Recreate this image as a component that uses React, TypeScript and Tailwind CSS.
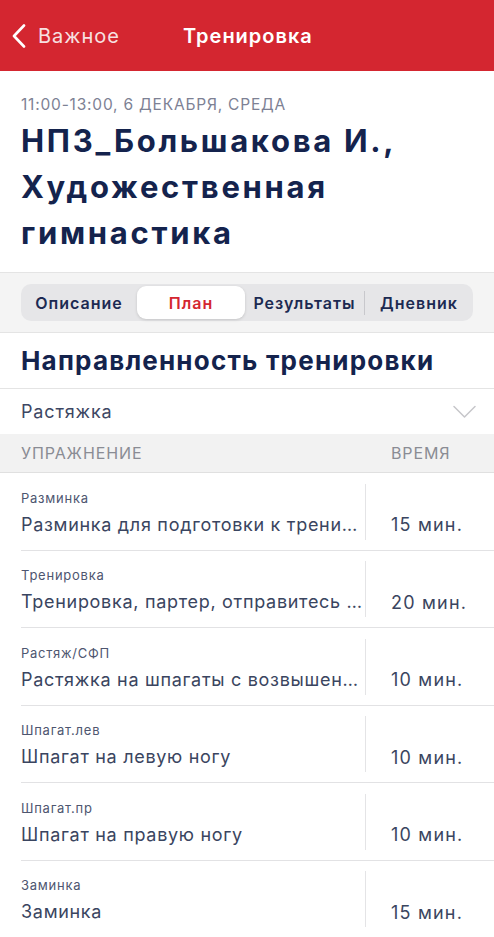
const exercises = [
  { cat: 'Разминка', name: 'Разминка для подготовки к тренировке', time: '15 мин.' },
  { cat: 'Тренировка', name: 'Тренировка, партер, отправитесь на ковёр', time: '20 мин.' },
  { cat: 'Растяж/СФП', name: 'Растяжка на шпагаты с возвышения', time: '10 мин.' },
  { cat: 'Шпагат.лев', name: 'Шпагат на левую ногу', time: '10 мин.' },
  { cat: 'Шпагат.пр', name: 'Шпагат на правую ногу', time: '10 мин.' },
  { cat: 'Заминка', name: 'Заминка', time: '15 мин.' },
];

export default function App() {
  return (
    <div className="w-[494px] min-h-[937px] bg-white font-['Inter',sans-serif] overflow-hidden">
      {/* Nav bar */}
      <div className="h-[71px] bg-[#d42630] flex items-center text-white">
        <div className="flex items-center pl-[12px] w-[183px]">
          <svg width="14" height="24" viewBox="0 0 14 24" fill="none">
            <polyline points="12,1.5 2,12 12,22.5" stroke="white" strokeWidth="2.6" strokeLinecap="round" strokeLinejoin="round" />
          </svg>
          <span className="text-[20px] ml-[12px] tracking-[1px] text-[#f7e0e1]">Важное</span>
        </div>
        <span className="text-[20px] font-semibold tracking-[1px]">Тренировка</span>
      </div>

      {/* Title */}
      <div className="px-[21px] pt-[22px] pb-[16px]">
        <div className="text-[15.5px] text-[#7d8194] tracking-[0.8px]">11:00-13:00, 6 ДЕКАБРЯ, СРЕДА</div>
        <h1 className="mt-[2px] text-[31px] leading-[46px] font-bold text-[#14234d] tracking-[2.7px]">
          НПЗ_Большакова И.,<br />Художественная<br />гимнастика
        </h1>
      </div>

      {/* Segmented control */}
      <div className="border-y border-[#e4e4e4] bg-[#f4f4f4] h-[61px] flex items-center px-[21px]">
        <div className="w-full h-[37px] rounded-[10px] bg-[#e6e6e8] flex items-center text-[16px] font-semibold tracking-[1px] text-[#1c2a52]">
          <div className="w-[116px] text-center">Описание</div>
          <div className="w-[108px] h-[33px] flex items-center justify-center bg-white rounded-[9px] shadow-[0_1px_3px_rgba(0,0,0,0.15)] text-[#d42630]">
            План
          </div>
          <div className="w-[120px] text-center border-r border-[#c8c8cc]">Результаты</div>
          <div className="flex-1 text-center">Дневник</div>
        </div>
      </div>

      {/* Section title */}
      <div className="h-[56px] flex items-center px-[21px] border-b border-[#e4e4e4]">
        <h2 className="text-[26px] font-bold text-[#14234d] tracking-[1.2px]">Направленность тренировки</h2>
      </div>

      {/* Dropdown */}
      <div className="h-[45px] flex items-center justify-between pl-[21px] pr-[18px]">
        <span className="text-[18px] text-[#3d4763] tracking-[0.85px]">Растяжка</span>
        <svg width="23" height="14" viewBox="0 0 23 14" fill="none">
          <polyline points="1,1.5 11.5,12 22,1.5" stroke="#c6c6ca" strokeWidth="1.5" strokeLinecap="round" strokeLinejoin="round" />
        </svg>
      </div>

      {/* Table header */}
      <div className="h-[39px] bg-[#f2f2f2] border-b border-[#e0e0e0] flex items-center px-[21px] text-[16px] tracking-[0.9px] text-[#8a8c94]">
        <span className="w-[370px]">УПРАЖНЕНИЕ</span>
        <span>ВРЕМЯ</span>
      </div>

      {/* Rows */}
      <div className="pl-[21px]">
        {exercises.map(ex => (
          <div key={ex.cat} className="h-[77.5px] flex items-center border-b border-[#e2e2e4]">
            <div className="w-[344px] min-w-0 pr-[2px] pt-[2px]">
              <div className="text-[13px] text-[#4e5670] leading-[18px] tracking-[0.75px]">{ex.cat}</div>
              <div className="mt-[6px] text-[18px] text-[#3a4560] leading-[24px] tracking-[0.7px] truncate">{ex.name}</div>
            </div>
            <div className="w-px h-[56px] bg-[#e4e4e6]" />
            <div className="pl-[25px] pt-[26px] text-[18px] tracking-[1.2px] text-[#3a4560]">{ex.time}</div>
          </div>
        ))}
      </div>
      <div className="h-[10px] bg-[#f2f2f2]" />
    </div>
  );
}
